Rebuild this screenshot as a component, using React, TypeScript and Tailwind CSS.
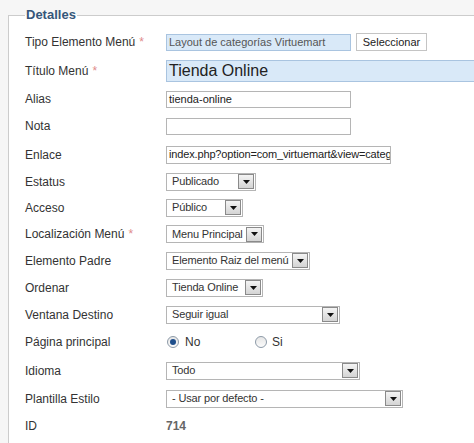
const rowHeights = [28, 30, 26, 28, 29, 25, 27, 26, 27, 27, 27, 28, 29, 27, 28];

function Label({ text, required }: { text: string; required?: boolean }) {
  return (
    <div className="w-[141px] shrink-0 text-[12px] text-[#333]">
      {text}
      {required && <span className="ml-1 text-[#e08a8a]">*</span>}
    </div>
  );
}

function Select({ value, width }: { value: string; width: number }) {
  return (
    <div
      className="flex h-[18px] items-center justify-between border border-[#b5b5b5] bg-white pl-[5px] pr-px text-[11px] text-[#333]"
      style={{ width }}
    >
      <span className="whitespace-nowrap tracking-[-0.15px]">{value}</span>
      <span className="ml-[2px] flex h-[15px] w-[16px] shrink-0 items-center justify-center border border-[#8a8a8a] bg-gradient-to-b from-[#f4f4f4] to-[#d4d4d4]">
        <svg width="7" height="4" viewBox="0 0 7 4">
          <path d="M0 0h7L3.5 4z" fill="#111" />
        </svg>
      </span>
    </div>
  );
}

function TextBox({ value, width, className = "" }: { value: string; width: number; className?: string }) {
  return (
    <div
      className={`flex h-[17px] items-center overflow-hidden whitespace-nowrap border border-[#b5b5b5] bg-white pl-[2px] text-[11px] text-[#222] ${className}`}
      style={{ width }}
    >
      {value}
    </div>
  );
}

function Radio({ checked }: { checked?: boolean }) {
  return (
    <span className="flex h-[12px] w-[12px] items-center justify-center rounded-full border border-[#8d9aa8] bg-gradient-to-b from-[#e6e6e6] to-[#fbfbfb]">
      {checked && <span className="h-[6px] w-[6px] rounded-full bg-[#1f4f8c]" />}
    </span>
  );
}

export default function App() {
  const rows: { label: string; required?: boolean; field: React.ReactNode }[] = [
    {
      label: "Tipo Elemento Menú",
      required: true,
      field: (
        <div className="flex items-center gap-[5px]">
          <div className="flex h-[17px] w-[185px] items-center border border-[#a9c4e0] bg-[#d9e9f8] pl-[2px] text-[11px] text-[#555]">
            Layout de categorías Virtuemart
          </div>
          <div className="flex h-[18px] w-[71px] items-center justify-center border border-[#c4c4c4] bg-white text-[11px] text-[#222]">
            Seleccionar
          </div>
        </div>
      ),
    },
    {
      label: "Título Menú",
      required: true,
      field: (
        <div className="flex h-[22px] w-[320px] items-center border border-[#a9c4e0] bg-[#d9e9f8] pl-[2px] text-[16px] text-[#222]">
          Tienda Online
        </div>
      ),
    },
    { label: "Alias", field: <TextBox value="tienda-online" width={185} /> },
    { label: "Nota", field: <TextBox value="" width={185} /> },
    {
      label: "Enlace",
      field: (
        <TextBox
          value="index.php?option=com_virtuemart&view=categ"
          width={225}
          className="h-[18px] tracking-[-0.15px]"
        />
      ),
    },
    { label: "Estatus", field: <Select value="Publicado" width={90} /> },
    { label: "Acceso", field: <Select value="Público" width={77} /> },
    { label: "Localización Menú", required: true, field: <Select value="Menu Principal" width={98} /> },
    { label: "Elemento Padre", field: <Select value="Elemento Raiz del menú" width={144} /> },
    { label: "Ordenar", field: <Select value="Tienda Online" width={97} /> },
    { label: "Ventana Destino", field: <Select value="Seguir igual" width={174} /> },
    {
      label: "Página principal",
      field: (
        <div className="flex items-center text-[12px] text-[#333]">
          <span className="ml-px"><Radio checked /></span>
          <span className="ml-[6px] w-[70px]">No</span>
          <Radio />
          <span className="ml-[5px]">Si</span>
        </div>
      ),
    },
    { label: "Idioma", field: <Select value="Todo" width={194} /> },
    { label: "Plantilla Estilo", field: <Select value="- Usar por defecto -" width={237} /> },
    { label: "ID", field: <span className="text-[12px] font-bold text-[#666]">714</span> },
  ];

  return (
    <div className="h-[443px] w-[474px] overflow-hidden bg-[#f6f6f6] pl-[8px] pt-[6px] font-['Liberation_Sans',Arial,sans-serif]">
      <fieldset className="h-[600px] w-[520px] border border-[#cccccc] bg-white pl-[16px]">
        <legend className="px-[1px] text-[13px] font-bold leading-[18px] text-[#35567a]">Detalles</legend>
        <div className="mt-[4px] flex flex-col">
          {rows.map((r, i) => (
            <div key={r.label} className="flex items-center" style={{ height: rowHeights[i] }}>
              <Label text={r.label} required={r.required} />
              {r.field}
            </div>
          ))}
        </div>
      </fieldset>
    </div>
  );
}
